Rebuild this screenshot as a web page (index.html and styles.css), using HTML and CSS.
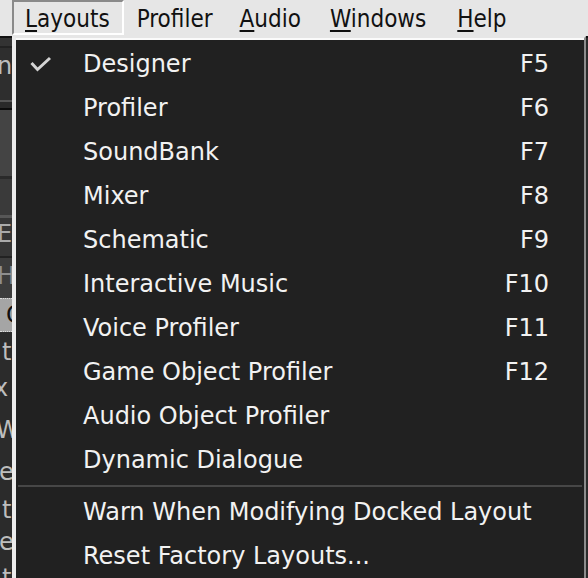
FILE: index.html
```html
<!DOCTYPE html>
<html>
<head>
<meta charset="utf-8">
<link rel="stylesheet" href="styles.css">
</head>
<body>
<div class="app">
  <div class="menubar">
    <div class="mitem open"><u>L</u>ayouts</div>
    <div class="mitem">Profiler</div>
    <div class="mitem wide"><u>A</u>udio</div>
    <div class="mitem wider"><u>W</u>indows</div>
    <div class="mitem"><u>H</u>elp</div>
  </div>
  <div class="workspace">
    <div class="strip">
      <div class="s s1"></div>
      <div class="s s2"><span>n</span></div>
      <div class="s s3"></div>
      <div class="s s4"></div>
      <div class="s s5"></div>
      <div class="s s6"><span>E</span></div>
      <div class="s s7"><span>H</span></div>
      <div class="s s8"><span>C</span></div>
      <div class="s s9"><span>t</span></div>
      <div class="s s10"><span>x</span></div>
      <div class="s s11"><span>W</span></div>
      <div class="s s12"><span>e</span></div>
      <div class="s s13"><span>t</span></div>
      <div class="s s14"><span>e</span></div>
      <div class="s s15"><span>t</span></div>
    </div>
  </div>
  <div class="popup">
    <div class="row">
      <span class="chk"><svg width="22" height="17" viewBox="0 0 22 17"><polyline points="1.5,7 7.5,13.5 20,2" fill="none" stroke="#d4d4d4" stroke-width="3"/></svg></span>
      <span class="lbl">Designer</span><span class="key">F5</span>
    </div>
    <div class="row"><span class="chk"></span><span class="lbl">Profiler</span><span class="key">F6</span></div>
    <div class="row"><span class="chk"></span><span class="lbl">SoundBank</span><span class="key">F7</span></div>
    <div class="row"><span class="chk"></span><span class="lbl">Mixer</span><span class="key">F8</span></div>
    <div class="row"><span class="chk"></span><span class="lbl">Schematic</span><span class="key">F9</span></div>
    <div class="row"><span class="chk"></span><span class="lbl">Interactive Music</span><span class="key">F10</span></div>
    <div class="row"><span class="chk"></span><span class="lbl">Voice Profiler</span><span class="key">F11</span></div>
    <div class="row"><span class="chk"></span><span class="lbl">Game Object Profiler</span><span class="key">F12</span></div>
    <div class="row"><span class="chk"></span><span class="lbl">Audio Object Profiler</span><span class="key"></span></div>
    <div class="row"><span class="chk"></span><span class="lbl">Dynamic Dialogue</span><span class="key"></span></div>
    <div class="sep"></div>
    <div class="row"><span class="chk"></span><span class="lbl">Warn When Modifying Docked Layout</span><span class="key"></span></div>
    <div class="row"><span class="chk"></span><span class="lbl">Reset Factory Layouts...</span><span class="key"></span></div>
  </div>
</div>
</body>
</html>
```
FILE: styles.css
```css
html, body {
  margin: 0;
  padding: 0;
  width: 588px;
  height: 578px;
  overflow: hidden;
  background: #2b2b2b;
}
.app {
  position: relative;
  width: 588px;
  height: 578px;
  font-family: "DejaVu Sans", sans-serif;
}
.menubar {
  height: 36px;
  background: #e6e6e6;
  display: flex;
  padding-left: 12px;
  font-family: "DejaVu Sans Condensed", "DejaVu Sans", sans-serif;
  font-stretch: condensed;
  font-size: 24px;
  color: #111;
}
.mitem {
  height: 27px;
  line-height: 27px;
  padding: 4px 12px 0 11px;
  border: 2px solid transparent;
}
.mitem.wide { padding-right: 14px; }
.mitem.wider { padding-right: 16px; }
.mitem u {
  text-decoration-thickness: 2px;
  text-underline-offset: 3px;
}
.mitem.open {
  border-top-color: #8a8a8a;
  border-left-color: #8a8a8a;
  border-right-color: #ffffff;
  border-bottom-color: #ffffff;
}
.workspace {
  height: 540px;
  border-top: 2px solid #111;
}
.strip {
  width: 12px;
  height: 100%;
  overflow: hidden;
  display: flex;
  flex-direction: column;
  font-size: 24px;
  color: #bdbdbd;
}
.s {
  flex: none;
  overflow: hidden;
  white-space: nowrap;
  line-height: 1;
}
.s span {
  display: block;
  margin-left: -3px;
}
.s1 { height: 8px; background: #333; border-bottom: 2px solid #222; }
.s2 { background: #2e2e2e; border-bottom: 2px solid #555; padding-top: 6px; box-sizing: border-box; height: 54px; }
.s3 { height: 6px; background: #2a2a2a; border-bottom: 2px solid #0c0c0c; }
.s4 { height: 66px; background: #444; border-bottom: 3px solid #2a2a2a; }
.s5 { height: 36px; background: #3a3a3a; border-bottom: 3px solid #575757; }
.s6 { height: 40px; background: #363636; padding-top: 4px; box-sizing: border-box; color: #aaa; border-bottom: 2px solid #222; }
.s7 { height: 40px; background: #3c3c3c; padding-top: 6px; box-sizing: border-box; color: #8e8e8e; }
.s8 { height: 34px; background: #a5a5a5; border-top: 1px dotted #ddd; border-bottom: 1px dotted #ddd; color: #111; padding-top: 4px; box-sizing: border-box; }
.s8 span { margin-left: 6px; }
.s9 { height: 40px; background: #2b2b2b; padding-top: 8px; box-sizing: border-box; }
.s9 span, .s13 span, .s15 span { margin-left: 2px; }
.s10 { height: 40px; padding-top: 4px; box-sizing: border-box; }
.s10 span { margin-left: -6px; }
.s11 { height: 40px; padding-top: 6px; box-sizing: border-box; }
.s11 span { margin-left: -4px; }
.s12 { height: 40px; padding-top: 8px; box-sizing: border-box; }
.s12 span { margin-left: -1px; }
.s13 { height: 36px; padding-top: 6px; box-sizing: border-box; }
.s14 { height: 34px; padding-top: 2px; box-sizing: border-box; }
.s14 span { margin-left: -1px; }
.s15 { height: 40px; padding-top: 4px; box-sizing: border-box; }

.popup {
  position: absolute;
  left: 12px;
  top: 36px;
  width: 568px;
  height: 560px;
  background: #212121;
  border-top: 2px solid #e6e6e6;
  border-left: 4px solid #ececec;
  border-right: 2px solid #8c8c8c;
  box-shadow: inset 0 2px 0 #fafafa;
  padding-top: 4px;
  box-sizing: content-box;
  color: #f2f2f2;
  font-size: 24px;
}
.row {
  height: 44px;
  line-height: 44px;
  display: grid;
  grid-template-columns: 67px 1fr auto;
  padding-right: 35px;
  white-space: nowrap;
}
.chk {
  display: flex;
  align-items: center;
  padding-left: 14px;
}
.chk svg { display: block; }
.key { text-align: right; }
.sep {
  height: 2px;
  margin: 3px 2px 3px 2px;
  background: #474747;
}
```
